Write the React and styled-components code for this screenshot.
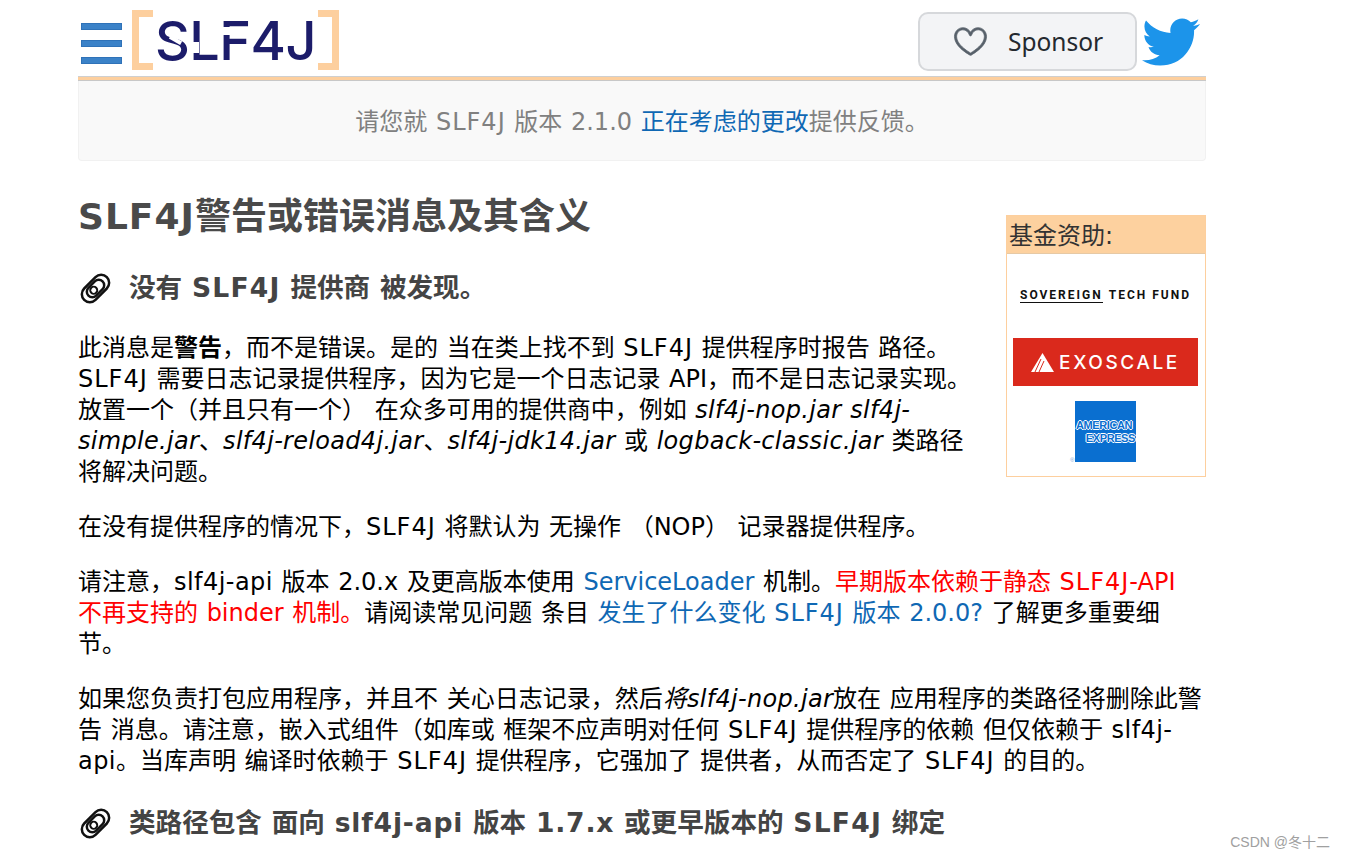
import React from "react";
import styled, { createGlobalStyle } from "styled-components";
import { FaTwitter } from "react-icons/fa";
import { GoHeart } from "react-icons/go";

const FONT = `Verdana, "DejaVu Sans", "Noto Sans CJK SC", sans-serif`;

const GlobalStyle = createGlobalStyle`
  html, body {
    margin: 0;
    padding: 0;
    background: #fff;
    overflow: hidden;
  }
  body {
    font-family: ${FONT};
    color: #000;
  }
`;

const Page = styled.div`
  position: relative;
  width: 1345px;
  height: 860px;
  overflow: hidden;
`;

const Container = styled.div`
  width: 1128px;
  margin-left: 78px;
`;

const Header = styled.header`
  display: flex;
  align-items: center;
  justify-content: space-between;
  height: 77px;
  border-bottom: 3px solid #fdcf9e;
  box-shadow: 0 1px 0 #c8c8c8, inset 0 -1px 0 #cfcfcf;
`;

const Brand = styled.div`
  display: flex;
  align-items: center;
  gap: 10px;
  padding: 3px 0 0 3px;
`;

const Burger = styled.div`
  display: flex;
  flex-direction: column;
  gap: 10px;
  width: 41px;
  margin-top: 6px;
`;

const BurgerBar = styled.span`
  display: block;
  height: 7px;
  background: #3b82c8;
  border: 1px solid #2f72b8;
  box-sizing: border-box;
`;

const LogoBox = styled.div`
  display: flex;
  align-items: center;
  justify-content: center;
  position: relative;
  width: 207px;
  height: 60px;
  font-family: "Inter", sans-serif;
  font-size: 54px;
  font-weight: 500;
  letter-spacing: -0.5px;
  color: #1c1c6a;
`;

const Bracket = styled.span`
  position: absolute;
  top: 0;
  bottom: 0;
  width: 21px;
  box-sizing: border-box;
  border: 7px solid #fdcf9e;
  ${(p) => (p.$right ? "right: 0; border-left: 0;" : "left: 0; border-right: 0;")}
`;

// stencil cuts laid over the logo letters
const Slit = styled.span`
  position: absolute;
  background: #fff;
  left: ${(p) => p.$x}px;
  top: ${(p) => p.$y}px;
  width: ${(p) => p.$w}px;
  height: ${(p) => p.$h}px;
  transform: rotate(${(p) => p.$r || 0}deg);
`;

const Actions = styled.div`
  display: flex;
  align-items: center;
  gap: 5px;
  padding: 6px 6px 0 0;
  color: #1c94ea;
`;

const SponsorButton = styled.div`
  display: flex;
  align-items: center;
  box-sizing: border-box;
  width: 219px;
  height: 59px;
  padding-left: 33px;
  gap: 20px;
  background: #f3f4f6;
  border: 2px solid #d6d8db;
  border-radius: 10px;
  font-family: "Noto Sans", sans-serif;
  font-size: 24.5px;
  color: #24292f;
  svg {
    color: #57606a;
    stroke: #57606a;
    stroke-width: 0.5px;
  }
`;

const Banner = styled.div`
  display: flex;
  align-items: center;
  justify-content: center;
  box-sizing: border-box;
  height: 80px;
  padding-bottom: 3px;
  margin-top: 1px;
  background: #f9f9f9;
  border: 1px solid #f1f1f1;
  border-top: 0;
  border-radius: 0 0 4px 4px;
  color: #808080;
  font-size: 24px;
  word-spacing: 1px;
`;

const Link = styled.span`
  color: #0f68b4;
`;

const Mark = styled.span`
  letter-spacing: 1px;
`;

const Code = styled.span`
  letter-spacing: 0.45px;
`;

const Em = styled.i`
  letter-spacing: 0.3px;
`;

const Content = styled.main`
  padding-top: 31px;
`;

const Sidebar = styled.aside`
  float: right;
  box-sizing: border-box;
  width: 200px;
  height: 262px;
  margin: 23px 0 16px 22px;
  border: 1px solid #fdcf9e;
`;

const SidebarTitle = styled.div`
  height: 38px;
  padding: 1px 0 0 2px;
  background: #fdd19f;
  border-bottom: 1px solid #e6c9a5;
  box-sizing: border-box;
  font-size: 24px;
  line-height: 38px;
  color: #333;
`;

const SponsorList = styled.div`
  display: flex;
  flex-direction: column;
  align-items: center;
  padding-right: 1px;
`;

const Sovereign = styled.div`
  display: flex;
  gap: 6px;
  margin-top: 34px;
  font-family: "Roboto", sans-serif;
  font-size: 12px;
  font-weight: 700;
  letter-spacing: 2px;
  color: #111;
  line-height: 14px;
`;

const Underlined = styled.span`
  border-bottom: 1px solid #111;
`;

const Exoscale = styled.div`
  display: flex;
  align-items: center;
  justify-content: center;
  gap: 5px;
  width: 185px;
  height: 48px;
  margin-top: 35px;
  background: #da291c;
  color: #fff;
  font-family: "Inter", sans-serif;
  font-size: 19px;
  font-weight: 500;
  letter-spacing: 2.6px;
`;

const AmexRow = styled.div`
  position: relative;
  margin-top: 15px;
`;

const Amex = styled.div`
  display: flex;
  flex-direction: column;
  justify-content: center;
  width: 61px;
  height: 61px;
  box-sizing: border-box;
  background: #0a6fd0;
  color: #0a6fd0;
  font-family: "Liberation Sans", sans-serif;
  font-size: 11px;
  font-weight: 700;
  line-height: 13px;
  letter-spacing: -0.4px;
  text-shadow: 1px 0 0 #fff, -1px 0 0 #fff, 0 1px 0 #fff, 0 -1px 0 #fff;
`;

const AmexLine = styled.span`
  text-align: ${(p) => (p.$right ? "right" : "left")};
  padding: 0 1px;
`;

const Registered = styled.span`
  position: absolute;
  left: -5px;
  bottom: -1px;
  font-family: "Liberation Sans", sans-serif;
  font-size: 6px;
  color: #7aa6d8;
`;

const Title = styled.h1`
  margin: 0;
  font-size: 36px;
  line-height: 50px;
  font-weight: 700;
  color: #4a4a4a;
`;

const Heading = styled.h3`
  display: flex;
  align-items: center;
  gap: 16px;
  margin: 25px 0 24px;
  font-size: 26.6px;
  line-height: 42px;
  font-weight: 700;
  color: #444;
  word-spacing: 0.5px;
  ${Mark} {
    letter-spacing: 1.2px;
  }
  ${Code} {
    letter-spacing: 0.8px;
  }
`;

const Paragraph = styled.p`
  margin: 0 0 24px;
  font-size: 24px;
  line-height: 31px;
  word-spacing: 1px;
`;

const Warn = styled.span`
  color: #f00;
`;

const Watermark = styled.div`
  position: absolute;
  right: 15px;
  bottom: 9px;
  font-family: "Liberation Sans", "Noto Sans CJK SC", sans-serif;
  font-size: 14px;
  color: #a0a0a0;
`;

const ClipIcon = () => (
  <svg width="35" height="35" viewBox="0 0 35 35" fill="none" stroke="#111">
    <g transform="rotate(-45 17.5 17.5)">
      <rect x="1.5" y="9.5" width="32" height="16" rx="8" strokeWidth="2.5" />
      <rect x="7.5" y="12" width="20" height="11" rx="5.5" strokeWidth="2.5" />
      <circle cx="15" cy="17.5" r="3.5" strokeWidth="2" fill="#fff" />
    </g>
  </svg>
);

const Slf = () => <Mark>SLF4J</Mark>;

const App = () => (
  <Page>
    <GlobalStyle />
    <Container>
      <Header>
        <Brand>
          <Burger>
            <BurgerBar />
            <BurgerBar />
            <BurgerBar />
          </Burger>
          <LogoBox>
            <Bracket />
            SLF4J
            <Slit $x={37} $y={28} $w={13} $h={4} $r={30} />
            <Slit $x={57} $y={32} $w={10} $h={11} />
            <Slit $x={88} $y={17} $w={11} $h={8} />
            <Bracket $right />
          </LogoBox>
        </Brand>
        <Actions>
          <SponsorButton>
            <GoHeart size={35} />
            Sponsor
          </SponsorButton>
          <FaTwitter size={58} />
        </Actions>
      </Header>
      <Banner>
        <span>
          请您就 <Slf /> 版本 2.1.0 <Link>正在考虑的更改</Link>提供反馈。
        </span>
      </Banner>
      <Content>
        <Sidebar>
          <SidebarTitle>基金资助:</SidebarTitle>
          <SponsorList>
            <Sovereign>
              <Underlined>SOVEREIGN</Underlined>
              <span>TECH FUND</span>
            </Sovereign>
            <Exoscale>
              <svg width="23" height="19" viewBox="0 0 23 19">
                <path d="M11.5 0 L23 19 H0 Z" fill="#fff" />
                <path d="M8 19 L13 8 M4 19 L10 6" stroke="#da291c" strokeWidth="1" />
              </svg>
              EXOSCALE
            </Exoscale>
            <AmexRow>
              <Amex>
                <AmexLine>AMERICAN</AmexLine>
                <AmexLine $right>EXPRESS</AmexLine>
              </Amex>
              <Registered>®</Registered>
            </AmexRow>
          </SponsorList>
        </Sidebar>
        <Title>
          <Mark>SLF4J</Mark>警告或错误消息及其含义
        </Title>
        <Heading>
          <ClipIcon />
          <span>
            没有 <Slf /> 提供商 被发现。
          </span>
        </Heading>
        <Paragraph>
          此消息是<b>警告</b>，而不是错误。是的 当在类上找不到 <Slf /> 提供程序时报告 路径。 <Slf />{" "}
          需要日志记录提供程序，因为它是一个日志记录 API，而不是日志记录实现。放置一个（并且只有一个）
          在众多可用的提供商中，例如 <Em>slf4j-nop.jar slf4j-simple.jar</Em>、<Em>slf4j-reload4j.jar</Em>、
          <Em>slf4j-jdk14.jar</Em> 或 <Em>logback-classic.jar</Em> 类路径将解决问题。
        </Paragraph>
        <Paragraph>
          在没有提供程序的情况下，<Slf /> 将默认为 无操作 （NOP） 记录器提供程序。
        </Paragraph>
        <Paragraph>
          请注意，<Code>slf4j-api</Code> 版本 2.0.x 及更高版本使用 <Link>ServiceLoader</Link> 机制。
          <Warn>
            早期版本依赖于静态 <Slf />-API 不再支持的 binder 机制。
          </Warn>
          请阅读常见问题 条目{" "}
          <Link>
            发生了什么变化 <Slf /> 版本 2.0.0?
          </Link>{" "}
          了解更多重要细节。
        </Paragraph>
        <Paragraph>
          如果您负责打包应用程序，并且不 关心日志记录，然后<Em>将slf4j-nop.jar</Em>放在
          应用程序的类路径将删除此警告 消息。请注意，嵌入式组件（如库或 框架不应声明对任何 <Slf />{" "}
          提供程序的依赖 但仅依赖于 <Code>slf4j-api</Code>。当库声明 编译时依赖于 <Slf /> 提供程序，它强加了
          提供者，从而否定了 <Slf /> 的目的。
        </Paragraph>
        <Heading>
          <ClipIcon />
          <span>
            类路径包含 面向 <Code>slf4j-api</Code> 版本 <Code>1.7.x</Code> 或更早版本的 <Slf /> 绑定
          </span>
        </Heading>
      </Content>
    </Container>
    <Watermark>CSDN @冬十二</Watermark>
  </Page>
);

export default App;
